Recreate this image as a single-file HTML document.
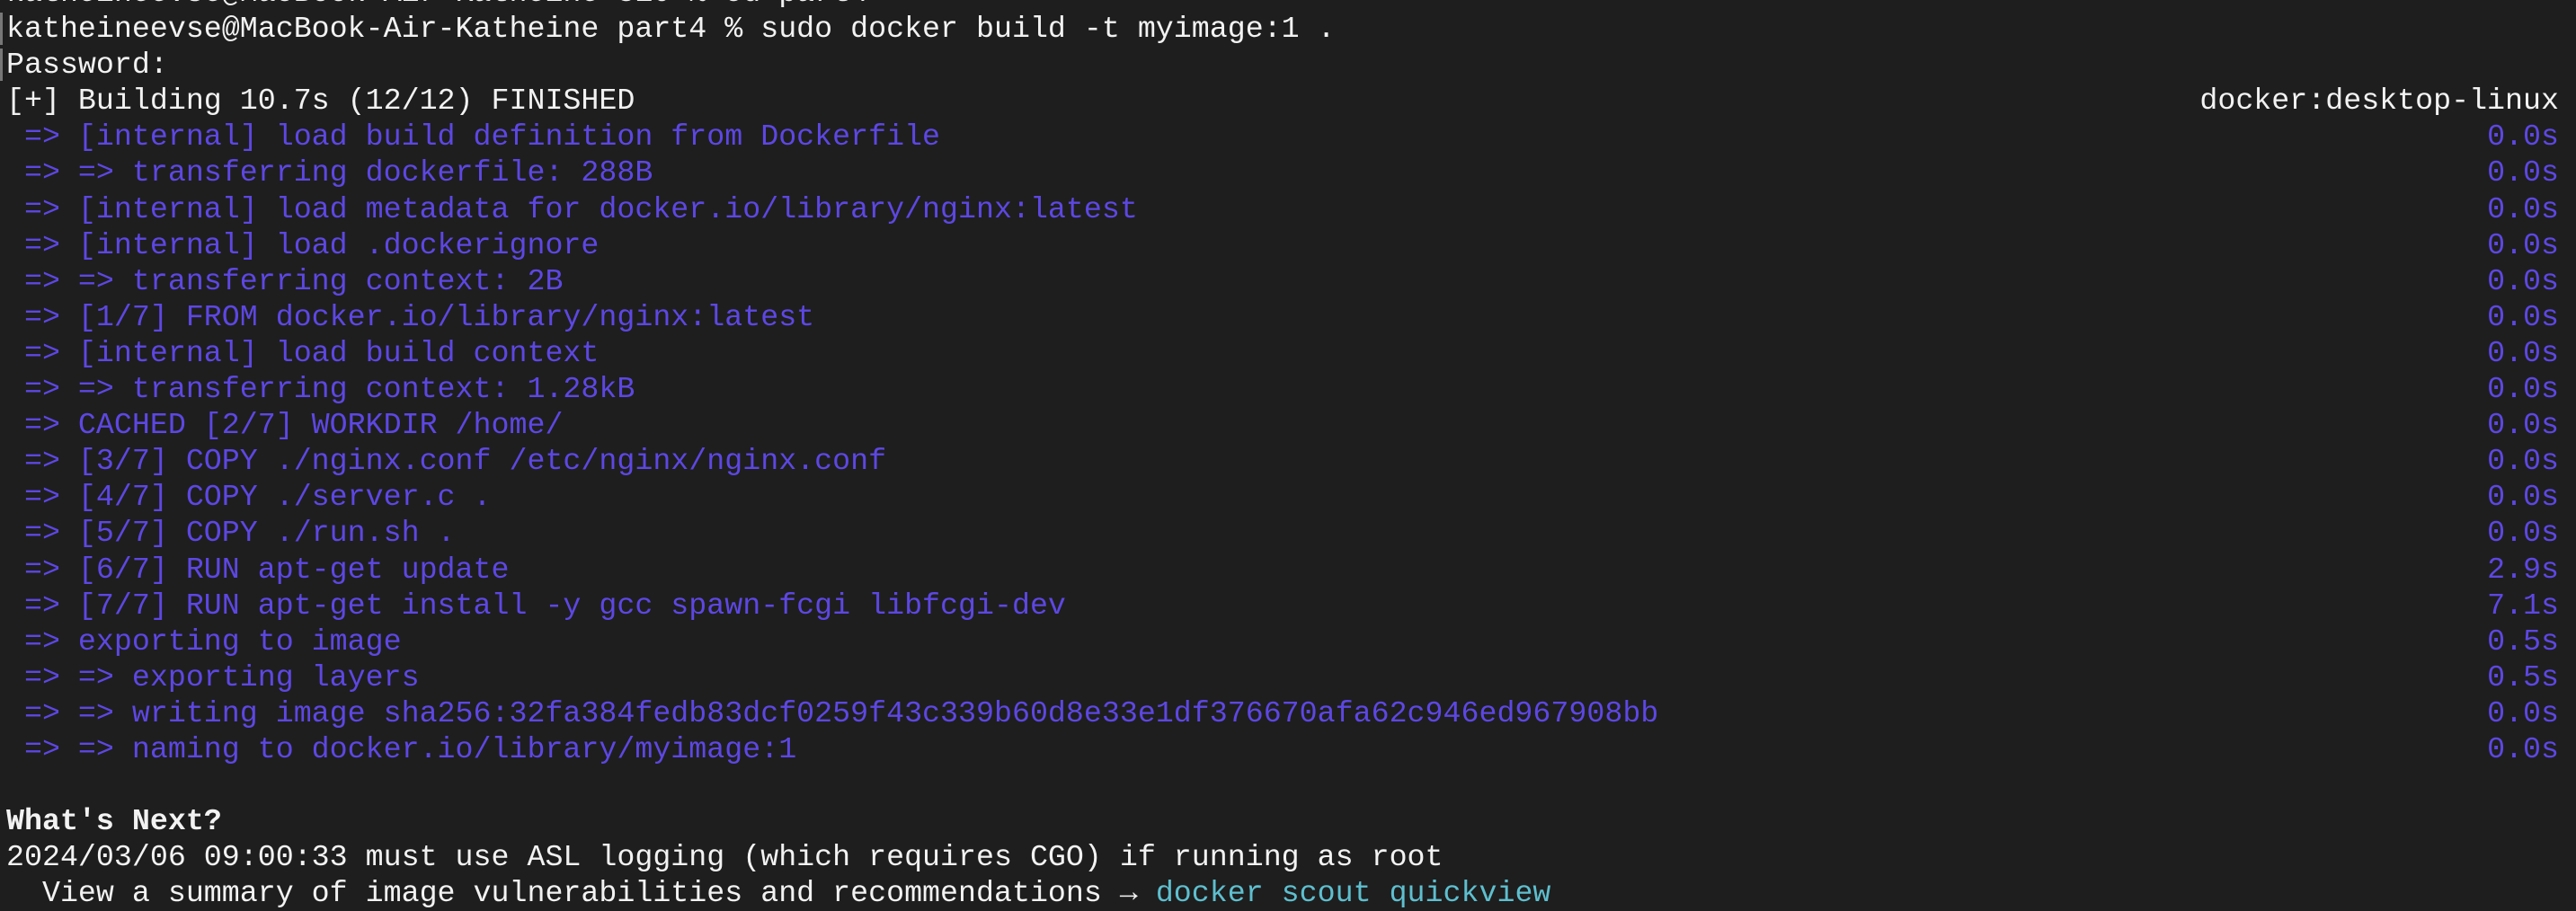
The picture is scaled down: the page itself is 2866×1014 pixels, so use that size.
<!DOCTYPE html>
<html><head><meta charset="utf-8"><style>
html,body{margin:0;padding:0;background:#1e1e1e;width:2866px;height:1010px;overflow:hidden}
pre{margin:0;position:absolute;left:7px;top:-28px;font-family:"Liberation Mono","DejaVu Sans Mono",monospace;font-size:33.3px;line-height:40.1px;color:#f2f2f2;width:2840px}
.l{display:flex;justify-content:space-between;height:40.1px;white-space:pre}
.p{color:#5d47e3}
.c{color:#5ebfcf}
b{font-weight:bold}
.m{position:absolute;left:0;width:3px;height:36px;background:#777}
</style></head><body>
<div class="m" style="top:14px"></div><div class="m" style="top:54px"></div>
<pre><div class="l">katheineevse@MacBook-Air-Katheine-310 % cd part4</div><div class="l">katheineevse@MacBook-Air-Katheine part4 % sudo docker build -t myimage:1 .</div><div class="l">Password:</div><div class="l"><span>[+] Building 10.7s (12/12) FINISHED</span><span>docker:desktop-linux</span></div><div class="l p"><span> =&gt; [internal] load build definition from Dockerfile</span><span>0.0s</span></div><div class="l p"><span> =&gt; =&gt; transferring dockerfile: 288B</span><span>0.0s</span></div><div class="l p"><span> =&gt; [internal] load metadata for docker.io/library/nginx:latest</span><span>0.0s</span></div><div class="l p"><span> =&gt; [internal] load .dockerignore</span><span>0.0s</span></div><div class="l p"><span> =&gt; =&gt; transferring context: 2B</span><span>0.0s</span></div><div class="l p"><span> =&gt; [1/7] FROM docker.io/library/nginx:latest</span><span>0.0s</span></div><div class="l p"><span> =&gt; [internal] load build context</span><span>0.0s</span></div><div class="l p"><span> =&gt; =&gt; transferring context: 1.28kB</span><span>0.0s</span></div><div class="l p"><span> =&gt; CACHED [2/7] WORKDIR /home/</span><span>0.0s</span></div><div class="l p"><span> =&gt; [3/7] COPY ./nginx.conf /etc/nginx/nginx.conf</span><span>0.0s</span></div><div class="l p"><span> =&gt; [4/7] COPY ./server.c .</span><span>0.0s</span></div><div class="l p"><span> =&gt; [5/7] COPY ./run.sh .</span><span>0.0s</span></div><div class="l p"><span> =&gt; [6/7] RUN apt-get update</span><span>2.9s</span></div><div class="l p"><span> =&gt; [7/7] RUN apt-get install -y gcc spawn-fcgi libfcgi-dev</span><span>7.1s</span></div><div class="l p"><span> =&gt; exporting to image</span><span>0.5s</span></div><div class="l p"><span> =&gt; =&gt; exporting layers</span><span>0.5s</span></div><div class="l p"><span> =&gt; =&gt; writing image sha256:32fa384fedb83dcf0259f43c339b60d8e33e1df376670afa62c946ed967908bb</span><span>0.0s</span></div><div class="l p"><span> =&gt; =&gt; naming to docker.io/library/myimage:1</span><span>0.0s</span></div><div class="l"> </div><div class="l"><b>What's Next?</b></div><div class="l">2024/03/06 09:00:33 must use ASL logging (which requires CGO) if running as root</div><div class="l"><span>  View a summary of image vulnerabilities and recommendations → <span class="c">docker scout quickview</span></span></div></pre>
</body></html>
